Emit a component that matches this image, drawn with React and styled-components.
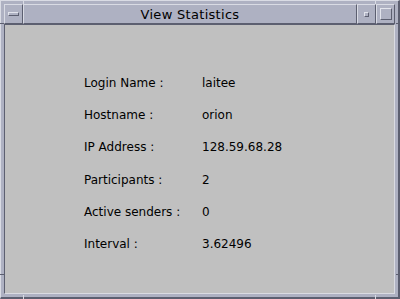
import React from "react";
import styled, { createGlobalStyle } from "styled-components";

const GlobalStyle = createGlobalStyle`
  html, body {
    margin: 0;
    padding: 0;
    background: #aeb1c2;
  }
  * {
    box-sizing: border-box;
  }
`;

const Window = styled.div`
  position: relative;
  width: 400px;
  height: 299px;
  display: flex;
  flex-direction: column;
  padding: 3px 3px 3px 3px;
  background: #aeb1c2;
  border-top: 1px solid #d9dbe4;
  border-left: 1px solid #d9dbe4;
  border-right: 2px solid #5c5f70;
  border-bottom: 2px solid #5c5f70;
  font-family: "DejaVu Sans", "Liberation Sans", sans-serif;
`;

const Tick = styled.span`
  position: absolute;
  background: ${(p) => (p.$light ? "#d9dbe4" : "#5c5f70")};
  width: ${(p) => (p.$vertical ? "1px" : "4px")};
  height: ${(p) => (p.$vertical ? "4px" : "1px")};
`;

const TitleBar = styled.div`
  display: flex;
  height: 20px;
  flex-shrink: 0;
`;

const TitleCell = styled.div`
  display: flex;
  align-items: center;
  justify-content: center;
  background: #aeb1c2;
  border-top: 1px solid #d9dbe4;
  border-left: 1px solid #d9dbe4;
  border-right: 1px solid #5c5f70;
  border-bottom: 1px solid #5c5f70;
  width: ${(p) => p.$width || "auto"};
  flex: ${(p) => (p.$grow ? 1 : "none")};
`;

const Title = styled.span`
  font-size: 13px;
  color: #000;
  letter-spacing: 0.3px;
  margin-left: 0;
`;

const Bevel = styled.span`
  display: block;
  width: ${(p) => p.$w}px;
  height: ${(p) => p.$h}px;
  border-top: 1px solid #e2e4ec;
  border-left: 1px solid #e2e4ec;
  border-right: 1px solid #5c5f70;
  border-bottom: 1px solid #5c5f70;
`;

const Content = styled.div`
  flex: 1;
  background: #c0c0c0;
  border-top: 1px solid #5c5f70;
  border-left: 1px solid #5c5f70;
  border-right: 1px solid #dadbe2;
  border-bottom: 1px solid #dadbe2;
  padding: 42px 0 0 79px;
`;

const Grid = styled.div`
  display: grid;
  grid-template-columns: 118px auto;
  grid-auto-rows: 32.2px;
  align-items: center;
  font-size: 12px;
  color: #000;
`;

const Label = styled.span`
  white-space: nowrap;
`;

const Value = styled.span`
  white-space: nowrap;
`;

const rows = [
  ["Login Name :", "laitee"],
  ["Hostname :", "orion"],
  ["IP Address :", "128.59.68.28"],
  ["Participants :", "2"],
  ["Active senders :", "0"],
  ["Interval :", "3.62496"],
];

export default function App() {
  return (
    <>
      <GlobalStyle />
      <Window>
        <Tick $vertical $light style={{ left: 22, top: -1 }} />
        <Tick $vertical $light style={{ right: 22, top: -1 }} />
        <Tick $vertical $light style={{ left: 22, bottom: -2 }} />
        <Tick $vertical $light style={{ right: 22, bottom: -2 }} />
        <Tick style={{ left: -1, top: 22 }} />
        <Tick style={{ right: -2, top: 22 }} />
        <Tick style={{ left: -1, bottom: 22 }} />
        <Tick style={{ right: -2, bottom: 22 }} />
        <TitleBar>
          <TitleCell $width="19px">
            <Bevel $w={11} $h={4} />
          </TitleCell>
          <TitleCell $grow>
            <Title>View Statistics</Title>
          </TitleCell>
          <TitleCell $width="19px">
            <Bevel $w={5} $h={5} />
          </TitleCell>
          <TitleCell $width="19px">
            <Bevel $w={12} $h={12} />
          </TitleCell>
        </TitleBar>
        <Content>
          <Grid>
            {rows.map(([label, value]) => (
              <React.Fragment key={label}>
                <Label>{label}</Label>
                <Value>{value}</Value>
              </React.Fragment>
            ))}
          </Grid>
        </Content>
      </Window>
    </>
  );
}
